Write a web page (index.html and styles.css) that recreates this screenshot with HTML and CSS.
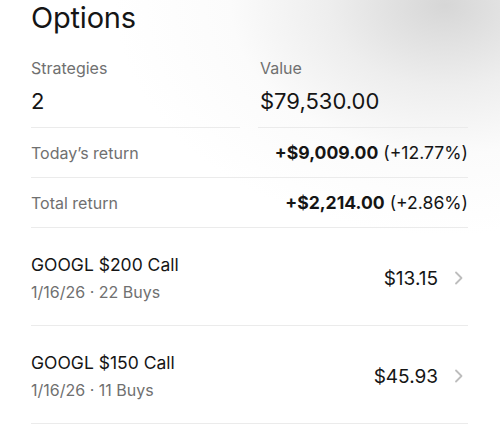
FILE: index.html
```html
<!DOCTYPE html>
<html>
<head>
<meta charset="utf-8">
<link rel="stylesheet" href="styles.css">
</head>
<body>
<main class="page">
  <h1 class="title">Options</h1>
  <section class="stats">
    <div class="stat">
      <div class="stat-label">Strategies</div>
      <div class="stat-value">2</div>
    </div>
    <div class="stat">
      <div class="stat-label">Value</div>
      <div class="stat-value">$79,530.00</div>
    </div>
  </section>
  <section class="returns">
    <div class="return-row">
      <span class="return-label">Today’s return</span>
      <span class="return-value"><b>+$9,009.00</b> (+12.77%)</span>
    </div>
    <div class="return-row">
      <span class="return-label">Total return</span>
      <span class="return-value"><b>+$2,214.00</b> (+2.86%)</span>
    </div>
  </section>
  <section class="positions">
    <div class="position">
      <div class="pos-info">
        <div class="pos-name">GOOGL $200 Call</div>
        <div class="pos-sub">1/16/26 · 22 Buys</div>
      </div>
      <div class="pos-price">$13.15</div>
      <svg class="chev" viewBox="0 0 10 14" width="10" height="14"><path d="M2 1.5 L7.5 7 L2 12.5" fill="none" stroke="#bdbdbd" stroke-width="1.8" stroke-linecap="round" stroke-linejoin="round"/></svg>
    </div>
    <div class="position">
      <div class="pos-info">
        <div class="pos-name">GOOGL $150 Call</div>
        <div class="pos-sub">1/16/26 · 11 Buys</div>
      </div>
      <div class="pos-price">$45.93</div>
      <svg class="chev" viewBox="0 0 10 14" width="10" height="14"><path d="M2 1.5 L7.5 7 L2 12.5" fill="none" stroke="#bdbdbd" stroke-width="1.8" stroke-linecap="round" stroke-linejoin="round"/></svg>
    </div>
  </section>
</main>
</body>
</html>
```

FILE: styles.css
```css
html, body {
  margin: 0;
  padding: 0;
}
body {
  width: 500px;
  height: 442px;
  overflow: hidden;
  font-family: Inter, "Noto Sans", sans-serif;
  color: #151515;
  background:
    radial-gradient(ellipse 330px 230px at 445px 5px, rgba(210,210,210,0.9), rgba(226,226,226,0.6) 35%, rgba(242,242,242,0.3) 65%, rgba(255,255,255,0) 100%),
    #ffffff;
}
.page {
  padding: 0 32px 0 31px;
}
.title {
  margin: 0;
  font-size: 29px;
  line-height: 36px;
  font-weight: 400;
  letter-spacing: -0.2px;
}
.stats {
  display: grid;
  grid-template-columns: 209px 1fr;
  column-gap: 18px;
  margin-top: 22px;
}
.stat {
  border-bottom: 1px solid #ebebeb;
  padding-bottom: 14px;
}
.stat + .stat {
  padding-left: 2px;
}
.stat-label {
  font-size: 16px;
  line-height: 20px;
  color: #707070;
}
.stat-value {
  margin-top: 11px;
  font-size: 22px;
  line-height: 24px;
}
.return-row {
  display: flex;
  justify-content: space-between;
  align-items: center;
  height: 49px;
  border-bottom: 1px solid #ebebeb;
}
.return-label {
  font-size: 16px;
  color: #707070;
}
.return-value {
  font-size: 17.6px;
  color: #151515;
}
.return-value b {
  font-weight: 700;
}
.position {
  display: flex;
  align-items: center;
  height: 97px;
  border-bottom: 1px solid #ebebeb;
}
.pos-info {
  flex: 1;
  display: flex;
  flex-direction: column;
  gap: 6px;
  padding-top: 2px;
}
.pos-name {
  font-size: 17.5px;
  line-height: 22px;
}
.pos-sub {
  font-size: 16px;
  line-height: 20px;
  color: #707070;
}
.pos-price {
  font-size: 19px;
  padding-top: 3px;
}
.chev {
  margin-left: 16px;
  margin-right: 4px;
  margin-top: 3px;
}
```
